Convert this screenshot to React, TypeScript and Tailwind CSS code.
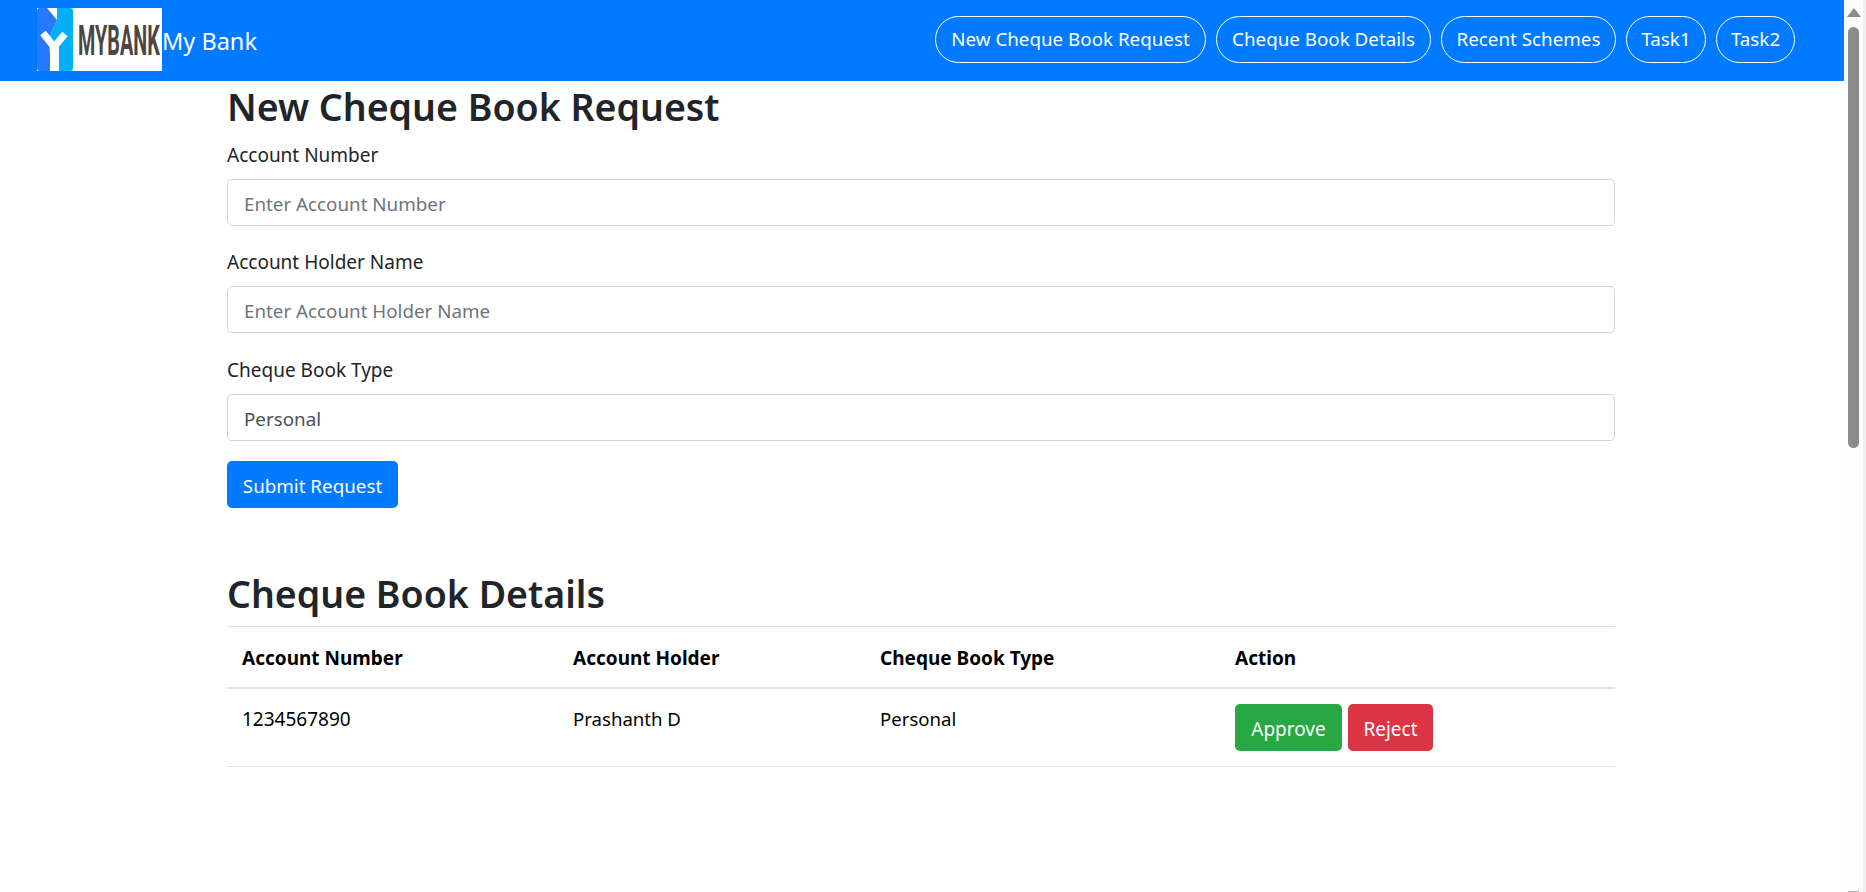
const navLinks = [
  { label: "New Cheque Book Request", width: "w-[271px]" },
  { label: "Cheque Book Details", width: "w-[215px]" },
  { label: "Recent Schemes", width: "w-[175px]" },
  { label: "Task1", width: "w-[80px]" },
  { label: "Task2", width: "w-[79px]" },
];

const Logo = () => (
  <svg width="125" height="63" viewBox="0 0 125 63" className="block shrink-0 bg-white">
    <path d="M3 0H10L20 12L12 30L14 63H3Q0 63 0 60V3Q0 0 3 0Z" fill="#2979ff" />
    <path d="M20 0H33Q36 0 36 3V60Q36 63 33 63H20V40L12 30L20 12Z" fill="#00b0ff" />
    <path d="M6 25L17 39L28 26" fill="none" stroke="#fff" strokeWidth="7" />
    <path d="M17.5 38V63" fill="none" stroke="#fff" strokeWidth="9" />
    <text
      transform="translate(41 47) scale(0.46 1)"
      fontFamily="Roboto, sans-serif"
      fontSize="43"
      fontWeight="700"
      fill="#4a4644"
    >
      MYBANK
    </text>
  </svg>
);

const Navbar = () => (
  <nav className="flex h-[81px] items-start justify-between bg-[#007bff] pt-[8px] pl-[37px] pr-[49px]">
    <div className="flex items-center">
      <Logo />
      <span className="pt-[2px] text-[23.5px] leading-[36px] text-white">My Bank</span>
    </div>
    <div className="mt-[8px] flex gap-[10px]">
      {navLinks.map((link) => (
        <a
          key={link.label}
          className={`${link.width} flex h-[47px] items-center justify-center whitespace-nowrap rounded-full border border-white text-[18.8px] text-white`}
        >
          {link.label}
        </a>
      ))}
    </div>
  </nav>
);

const Field = ({ label, children }) => (
  <div className="mb-[20.4px]">
    <label className="mb-[10px] block h-[30px] text-[19px] leading-[32px] text-[#212529]">
      {label}
    </label>
    {children}
  </div>
);

const inputClass =
  "block h-[47px] w-full rounded-[5px] border border-[#ced4da] bg-white px-[16px] pt-[3px] text-[18.8px] text-[#495057] outline-none placeholder:text-[#6c757d]";

const Scrollbar = () => (
  <aside className="flex h-full w-[22px] shrink-0 flex-col border-r-[3px] border-[#eeeeee] bg-[#fdfdfd] pl-[3px]">
    <svg width="14" height="10" viewBox="0 0 14 10" className="mt-[8px] block">
      <path d="M7 0L14 9H0Z" fill="#8b8b8b" />
    </svg>
    <div className="ml-px mt-[9px] h-[421px] w-[11px] rounded-full bg-[#8b8b8b]" />
    <div className="flex-1" />
    <div className="ml-px h-px w-[11px] bg-[#b5b5b5]" />
  </aside>
);

export default function App() {
  return (
    <div
      className="flex h-[892px] overflow-hidden bg-white"
      style={{ fontFamily: '"Noto Sans", sans-serif' }}
    >
      <div className="min-w-0 flex-1">
        <Navbar />
        <main className="ml-[227px] w-[1388px]">
          <h2 className="mb-[10px] h-[48px] text-[37.5px] font-semibold leading-[52px] text-[#212529]">
            New Cheque Book Request
          </h2>
          <Field label="Account Number">
            <input className={inputClass} placeholder="Enter Account Number" />
          </Field>
          <Field label="Account Holder Name">
            <input className={inputClass} placeholder="Enter Account Holder Name" />
          </Field>
          <Field label="Cheque Book Type">
            <select className={`${inputClass} appearance-none`} defaultValue="Personal">
              <option>Personal</option>
              <option>Business</option>
            </select>
          </Field>
          <button className="block h-[47px] w-[171px] rounded-[5px] bg-[#007bff] pt-[3px] text-[18.8px] text-white">
            Submit Request
          </button>

          <h2 className="mb-[10px] mt-[60px] h-[48px] text-[37.5px] font-semibold leading-[52px] text-[#212529]">
            Cheque Book Details
          </h2>
          <table className="w-full table-fixed border-collapse text-[18.6px] leading-[30px] text-black">
            <colgroup>
              <col className="w-[331px]" />
              <col className="w-[307px]" />
              <col className="w-[355px]" />
              <col />
            </colgroup>
            <thead>
              <tr className="border-t border-b-2 border-t-[#dee2e6] border-b-[#dee2e6] text-[19px]">
                <th className="px-[15px] pb-[14px] pt-[16px] text-left font-bold">Account Number</th>
                <th className="px-[15px] pb-[14px] pt-[16px] text-left font-bold">Account Holder</th>
                <th className="px-[15px] pb-[14px] pt-[16px] text-left font-bold">Cheque Book Type</th>
                <th className="px-[15px] pb-[14px] pt-[16px] text-left font-bold">Action</th>
              </tr>
            </thead>
            <tbody>
              <tr className="border-b border-[#dee2e6]">
                <td className="px-[15px] py-[15px] align-top text-[19px]">1234567890</td>
                <td className="px-[15px] py-[15px] align-top">Prashanth D</td>
                <td className="px-[15px] py-[15px] align-top">Personal</td>
                <td className="px-[15px] py-[15px] align-top">
                  <div className="flex gap-[6px]">
                    <button className="h-[47px] w-[107px] rounded-[5px] bg-[#28a745] pt-[2px] text-[19px] text-white">
                      Approve
                    </button>
                    <button className="h-[47px] w-[85px] rounded-[5px] bg-[#dc3545] pt-[2px] text-[19px] text-white">
                      Reject
                    </button>
                  </div>
                </td>
              </tr>
            </tbody>
          </table>
        </main>
      </div>
      <Scrollbar />
    </div>
  );
}
